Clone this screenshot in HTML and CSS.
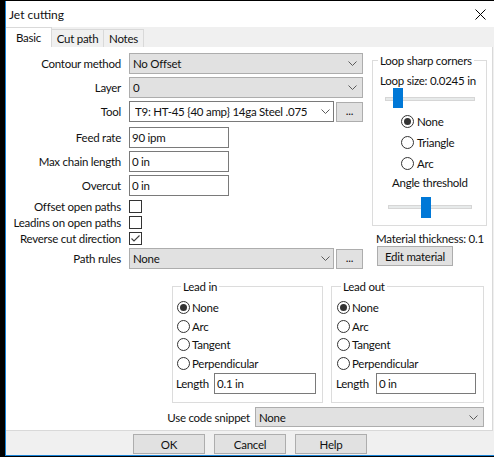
FILE: index.html
```html
<!DOCTYPE html>
<html>
<head>
<meta charset="utf-8">
<title>Jet cutting</title>
<link rel="stylesheet" href="styles.css">
</head>
<body>
<div class="window">
  <div class="titlebar">
    <span class="title">Jet cutting</span>
    <svg class="close" width="11" height="11" viewBox="0 0 11 11"><path d="M0.5 0.5L10.5 10.5M10.5 0.5L0.5 10.5" stroke="#000" stroke-width="1" fill="none"/></svg>
  </div>
  <div class="tabs">
    <div class="tab active">Basic</div>
    <div class="tab tab-cut">Cut path</div>
    <div class="tab tab-notes">Notes</div>
  </div>
  <div class="page">
    <div class="top">
      <div class="form">
        <div class="row">
          <span class="lbl">Contour method</span>
          <div class="combo list w-full"><span>No Offset</span><svg class="chev" width="9" height="5" viewBox="0 0 9 5"><path d="M0.5 0.5L4.5 4.5L8.5 0.5" stroke="#5a5a5a" fill="none"/></svg></div>
        </div>
        <div class="row">
          <span class="lbl">Layer</span>
          <div class="combo list w-full"><span>0</span><svg class="chev" width="9" height="5" viewBox="0 0 9 5"><path d="M0.5 0.5L4.5 4.5L8.5 0.5" stroke="#5a5a5a" fill="none"/></svg></div>
        </div>
        <div class="row">
          <span class="lbl">Tool</span>
          <div class="combo edit w-part"><span class="tool-text">T9: HT-45 {40 amp} 14ga Steel .075</span><svg class="chev chev-edit" width="9" height="5" viewBox="0 0 9 5"><path d="M0.5 0.5L4.5 4.5L8.5 0.5" stroke="#5a5a5a" fill="none"/></svg></div>
          <div class="btn dots">...</div>
        </div>
        <div class="row gap5">
          <span class="lbl">Feed rate</span>
          <div class="input w-short">90 ipm</div>
        </div>
        <div class="row">
          <span class="lbl">Max chain length</span>
          <div class="input w-short">0 in</div>
        </div>
        <div class="row">
          <span class="lbl">Overcut</span>
          <div class="input w-short">0 in</div>
        </div>
        <div class="row check-row first-check">
          <span class="lbl">Offset open paths</span>
          <span class="checkbox"></span>
        </div>
        <div class="row check-row">
          <span class="lbl">Leadins on open paths</span>
          <span class="checkbox"></span>
        </div>
        <div class="row check-row">
          <span class="lbl">Reverse cut direction</span>
          <span class="checkbox"><svg width="11" height="11" viewBox="0 0 11 11"><path d="M1.5 5.5L4 8L9.5 2.5" stroke="#3c3c3c" stroke-width="1.1" fill="none"/></svg></span>
        </div>
        <div class="row gap2">
          <span class="lbl">Path rules</span>
          <div class="combo list w-part"><span>None</span><svg class="chev chev-edit" width="9" height="5" viewBox="0 0 9 5"><path d="M0.5 0.5L4.5 4.5L8.5 0.5" stroke="#5a5a5a" fill="none"/></svg></div>
          <div class="btn dots">...</div>
        </div>
      </div>
      <div class="side">
        <fieldset class="loop">
          <legend>Loop sharp corners</legend>
          <div class="loop-size">Loop size: 0.0245 in</div>
          <div class="slider s1"><div class="track"></div><div class="thumb"></div></div>
          <div class="loop-radios">
            <div class="radio on"><span class="circle"></span>None</div>
            <div class="radio"><span class="circle"></span>Triangle</div>
            <div class="radio"><span class="circle"></span>Arc</div>
          </div>
          <div class="angle">Angle threshold</div>
          <div class="slider s2"><div class="track"></div><div class="thumb"></div></div>
        </fieldset>
        <div class="material">Material thickness: 0.1</div>
        <div class="btn edit-mat">Edit material</div>
      </div>
    </div>
    <div class="leads">
      <fieldset class="lead lead-in">
        <legend>Lead in</legend>
        <div class="lead-radios">
          <div class="radio on"><span class="circle"></span>None</div>
          <div class="radio"><span class="circle"></span>Arc</div>
          <div class="radio"><span class="circle"></span>Tangent</div>
          <div class="radio"><span class="circle"></span>Perpendicular</div>
        </div>
        <div class="length-row">
          <span class="len-lbl">Length</span>
          <div class="input len-input">0.1 in</div>
        </div>
      </fieldset>
      <fieldset class="lead lead-out">
        <legend>Lead out</legend>
        <div class="lead-radios">
          <div class="radio on"><span class="circle"></span>None</div>
          <div class="radio"><span class="circle"></span>Arc</div>
          <div class="radio"><span class="circle"></span>Tangent</div>
          <div class="radio"><span class="circle"></span>Perpendicular</div>
        </div>
        <div class="length-row">
          <span class="len-lbl">Length</span>
          <div class="input len-input">0 in</div>
        </div>
      </fieldset>
    </div>
    <div class="snippet">
      <span>Use code snippet</span>
      <div class="combo list w-snip"><span>None</span><svg class="chev" width="9" height="5" viewBox="0 0 9 5"><path d="M0.5 0.5L4.5 4.5L8.5 0.5" stroke="#5a5a5a" fill="none"/></svg></div>
    </div>
  </div>
  <div class="buttons">
    <div class="btn dlg">OK</div>
    <div class="btn dlg">Cancel</div>
    <div class="btn dlg">Help</div>
  </div>
</div>
</body>
</html>
```
FILE: styles.css
```css
* { box-sizing: border-box; }
html, body { margin: 0; padding: 0; }
body {
  background: #000;
  width: 494px;
  height: 457px;
  overflow: hidden;
  font-family: Lato, "Liberation Sans", sans-serif;
  font-size: 11.5px;
  letter-spacing: -0.25px;
  line-height: 15px;
  color: #111;
}
.window {
  margin: 1px 0 0 5px;
  width: 489px;
  height: 455px;
  background: #f0f0f0;
  border-left: 1px solid #1883d7;
  border-bottom: 1px solid #1883d7;
  display: flex;
  flex-direction: column;
}
.titlebar {
  height: 26px;
  flex: none;
  background: #fff;
  display: flex;
  align-items: center;
  padding-left: 3px;
}
.title { font-size: 12px; letter-spacing: 0; }
.close { margin-left: auto; margin-right: 8px; }
.tabs {
  height: 20px;
  flex: none;
  display: flex;
  align-items: flex-end;
  background: #f0f0f0;
}
.tab {
  height: 18px;
  display: flex;
  align-items: center;
  justify-content: center;
  background: #f0f0f0;
  border-top: 1px solid #d9d9d9;
  border-right: 1px solid #d9d9d9;
}
.tab.active {
  height: 20px;
  width: 46px;
  background: #fff;
}
.tab-cut { width: 52px; }
.tab-notes { width: 40px; }
.page {
  height: 384px;
  width: 487px;
  flex: none;
  background: #fff;
  border-right: 1px solid #d9d9d9;
  border-bottom: 1px solid #d9d9d9;
  padding-top: 6px;
}
.top { display: flex; }
.form { width: 357px; }
.row {
  display: flex;
  align-items: center;
  height: 21px;
  margin-top: 3px;
}
.row:first-child { margin-top: 0; }
.row.gap5 { margin-top: 5px; }
.row.gap2 { margin-top: 2px; }
.row.check-row { height: 16px; margin-top: 0; }
.row.first-check { margin-top: 2px; }
.lbl {
  width: 116px;
  flex: none;
  text-align: right;
  padding-right: 1px;
  margin-right: 7px;
  white-space: nowrap;
}
.combo {
  height: 21px;
  display: flex;
  align-items: center;
  padding-left: 3px;
  white-space: nowrap;
  overflow: hidden;
}
.combo.list { background: #e1e1e1; border: 1px solid #adadad; }
.combo.edit { background: #fff; border: 1px solid #7a7a7a; padding-left: 5px; }
.w-full { width: 235px; }
.w-part { width: 205px; }
.w-snip { width: 229px; height: 20px; }
.chev { margin-left: auto; margin-right: 5px; flex: none; }
.chev.chev-edit { margin-right: 3px; }
.tool-text { overflow: hidden; }
.btn {
  background: #e1e1e1;
  border: 1px solid #adadad;
  display: flex;
  align-items: center;
  justify-content: center;
  white-space: nowrap;
}
.dots { width: 27px; height: 20px; margin-left: 2px; padding-bottom: 3px; }
.input {
  height: 21px;
  border: 1px solid #7a7a7a;
  background: #fff;
  display: flex;
  align-items: center;
  padding-left: 2px;
  white-space: nowrap;
}
.w-short { width: 100px; }
.checkbox {
  width: 13px;
  height: 13px;
  border: 1px solid #333;
  background: #fff;
  display: flex;
  align-items: center;
  justify-content: center;
}
.side { margin-left: 9px; width: 120px; }
fieldset {
  margin: 0;
  padding: 0;
  min-width: 0;
  border: 1px solid #dcdcdc;
}
legend {
  padding: 0 2px;
  margin-left: 5px;
  line-height: 15px;
}
.loop { width: 115px; height: 173px; }
.loop-size { margin-top: 5px; padding-left: 7px; white-space: nowrap; }
.slider { position: relative; }
.slider .track {
  position: absolute;
  left: 0;
  right: 0;
  height: 4px;
  background: #e7eaea;
  border: 1px solid #d6d6d6;
}
.slider .thumb {
  position: absolute;
  width: 10px;
  background: #0078d7;
}
.s1 { margin-left: 12px; width: 90px; height: 20px; }
.s1 .track { top: 9px; }
.s1 .thumb { left: 8px; top: 0; height: 20px; }
.s2 { margin-left: 15px; width: 84px; height: 21px; margin-top: 7px; }
.s2 .track { top: 8px; }
.s2 .thumb { left: 33px; top: 0; height: 21px; }
.loop-radios { margin-top: 3px; padding-left: 28px; }
.radio {
  display: flex;
  align-items: center;
  height: 21px;
  white-space: nowrap;
}
.circle {
  width: 13px;
  height: 13px;
  border: 1px solid #333;
  border-radius: 50%;
  background: #fff;
  margin-right: 3px;
  flex: none;
  display: flex;
  align-items: center;
  justify-content: center;
}
.radio.on .circle::after {
  content: "";
  width: 7px;
  height: 7px;
  border-radius: 50%;
  background: #333;
}
.angle { margin-top: 1px; padding-left: 19px; white-space: nowrap; }
.material { margin-top: 5px; margin-left: 4px; white-space: nowrap; }
.edit-mat { margin-left: 5px; width: 76px; height: 20px; }
.leads {
  display: flex;
  gap: 8px;
  margin-top: 10px;
  padding-left: 166px;
}
.lead { height: 124px; }
.lead legend { margin-left: 4px; }
.lead-in { width: 151px; padding-left: 4px; }
.lead-out { width: 153px; padding-left: 5px; }
.lead-radios { padding-top: 4px; }
.lead-radios .radio { height: 18.75px; }
.lead-radios .circle { margin-right: 2px; }
.length-row { display: flex; align-items: center; height: 21px; }
.len-lbl { margin-left: -1px; }
.lead-in .len-lbl { width: 38px; }
.lead-out .len-lbl { width: 40px; }
.len-input { width: 102px; }
.lead-out .len-input { width: 100px; }
.snippet {
  display: flex;
  justify-content: flex-end;
  align-items: center;
  gap: 5px;
  margin-top: 4px;
  padding-right: 8px;
}
.buttons {
  display: flex;
  gap: 9px;
  padding-left: 127px;
  padding-top: 3px;
}
.dlg { width: 72px; height: 20px; }
```
